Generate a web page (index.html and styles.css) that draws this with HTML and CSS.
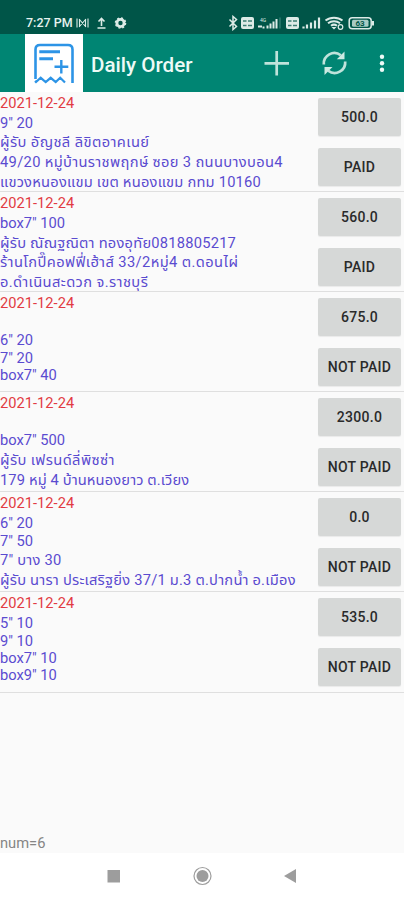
FILE: index.html
```
<!DOCTYPE html>
<html lang="th">
<head>
<meta charset="utf-8">
<title>Daily Order</title>
<link rel="stylesheet" href="styles.css">
</head>
<body>
<div class="screen">
  <div class="status">
    <span class="time">7:27 PM</span>
    <svg class="status-left" width="54" height="16" viewBox="0 0 54 16" fill="none" stroke="#dcebe7" stroke-width="1.3">
      <path d="M2 3.5v9M13 3.5v9M4 4l7 8M11 4l-7 8M4.5 4v8M10.500 4v8" stroke-width="1.100"/>
      <path d="M26.500 11V3.500M23.500 6.500l3-3 3 3M22.500 13h8" stroke-width="1.600"/>
      <circle cx="45.500" cy="8" r="3.600" stroke-width="2.800"/>
      <circle cx="45.500" cy="8" r="5.100" stroke-width="1.400" stroke-dasharray="2 2"/>
    </svg>
    <svg class="status-right" width="150" height="16" viewBox="0 0 150 16" fill="none" stroke="#dcebe7" stroke-width="1.500">
      <path d="M1.500 4.500l7 7-3.500 3V1.500l3.500 3-7 7"/>
      <rect x="13" y="2" width="13" height="12" rx="2" fill="#dcebe7" stroke="none"/>
      <path d="M15 6h3.500M20 6h4M15 10.500h3.500M20 10.500h4" stroke="#3b7f74" stroke-width="1.500"/>
      <path d="M30 11.500h4M35.500 13.500v-2" stroke-width="2"/>
      <text x="32" y="6.500" class="tiny">4G</text>
      <path d="M39.500 13.500v-3M42.500 13.500v-5M45.500 13.500v-7M48.500 13.500V4" stroke-width="2"/>
      <path d="M52 13.500V2.500" stroke="#2c7b6f" stroke-width="1.500"/>
      <rect x="58" y="2" width="13" height="12" rx="2" fill="#dcebe7" stroke="none"/>
      <path d="M60 6h3.500M65 6h4M60 10.500h3.500M65 10.500h4" stroke="#3b7f74" stroke-width="1.500"/>
      <path d="M75.500 13.500v-2M79 13.500v-4M83 13.500v-6M87 13.500v-8M91 13.500v-11" stroke-width="2.200"/>
      <path d="M97.500 5.500c4.800-3.800 12.200-3.800 17 0M100 8.300c3.500-2.800 8.500-2.800 12 0M103 10.800c2-1.600 4-1.600 6 0" stroke-width="2"/>
      <path d="M103.500 12l2.500 2.500 2.500-2.500z" fill="#dcebe7" stroke="none"/>
      <circle cx="112.500" cy="12" r="2.300" stroke-width="1.200"/>
      <rect x="121.200" y="2.700" width="22" height="11" rx="3"/>
      <rect x="124" y="4.800" width="16.500" height="7" rx="1.500" fill="#a9cbc4" stroke="none"/>
      <path d="M145 6v4.500" stroke-width="2"/>
      <text x="127.500" y="11.300" class="battery">63</text>
    </svg>
  </div>
  <header class="bar">
    <div class="logo">
      <svg width="58" height="58" viewBox="0 0 58 58" fill="none" stroke="#2d94e6">
        <path d="M10.500 45V15.500c0-3 1.500-4.500 4.500-4.500h28c3 0 4.500 1.500 4.500 4.500V49" stroke-width="2.600"/>
        <path d="M10 47l1 1 4.700-4.200 5 4.200 5-4.200 5 4.200 4.500-4.200 4.800 4.700" stroke-width="2.200"/>
        <path d="M14.300 17.700H35M14.300 24.700H28" stroke-width="3"/>
        <path d="M36.300 26v13.500M29.500 32.700h13.800" stroke-width="2.400"/>
      </svg>
    </div>
    <h1>Daily Order</h1>
    <svg class="actions" width="140" height="58" viewBox="0 0 140 58" fill="none" stroke="#bfe3db">
      <path d="M12.700 17v24.500M.5 29.300h24.500" stroke-width="2.700"/>
      <path d="M59.800 30.500a10.600 10.600 0 0 1 17-9.300M81.200 27.500a10.600 10.600 0 0 1-17 9.300" stroke-width="2.700"/>
      <path d="M80.500 17.500v7.700h-7.700zM60.500 41V33h8z" fill="#cdeae3" stroke="none"/>
      <g fill="#eefaf7" stroke="none"><circle cx="118" cy="22.800" r="2.200"/><circle cx="118" cy="29.300" r="2.200"/><circle cx="118" cy="35.800" r="2.200"/></g>
    </svg>
  </header>
  <main class="list">
    <section class="row">
      <div class="info"><p class="date">2021-12-24</p><p>9" 20</p><p class="th loose">ผู้รับ อัญชลี ลิขิตอาคเนย์</p><p class="th wide">49/20 หมู่บ้านราชพฤกษ์ ซอย 3 ถนนบางบอน4</p><p class="th medium">แขวงหนองแขม เขต หนองแขม กทม 10160</p></div>
      <div class="buttons"><button>500.0</button><button>PAID</button></div>
    </section>
    <section class="row">
      <div class="info"><p class="date">2021-12-24</p><p>box7" 100</p><p class="th medium">ผู้รับ ณัณฐณิตา ทองอุทัย0818805217</p><p class="th loose">ร้านโกปี๊คอฟฟี่เฮ้าส์ 33/2หมู่4 ต.ดอนไผ่</p><p class="th loose">อ.ดำเนินสะดวก จ.ราชบุรี</p></div>
      <div class="buttons"><button>560.0</button><button>PAID</button></div>
    </section>
    <section class="row">
      <div class="info"><p class="date">2021-12-24</p><p></p><p>6" 20</p><p>7" 20</p><p>box7" 40</p></div>
      <div class="buttons"><button>675.0</button><button>NOT PAID</button></div>
    </section>
    <section class="row">
      <div class="info"><p class="date">2021-12-24</p><p></p><p>box7" 500</p><p class="th loose">ผู้รับ เฟรนด์ลี่พิซซ่า</p><p class="th slight">179 หมู่ 4 บ้านหนองยาว ต.เวียง</p></div>
      <div class="buttons"><button>2300.0</button><button>NOT PAID</button></div>
    </section>
    <section class="row">
      <div class="info"><p class="date">2021-12-24</p><p>6" 20</p><p>7" 50</p><p class="th medium">7" บาง 30</p><p class="th medium">ผู้รับ นารา ประเสริฐยิ่ง 37/1 ม.3 ต.ปากน้ำ อ.เมือง</p></div>
      <div class="buttons"><button>0.0</button><button>NOT PAID</button></div>
    </section>
    <section class="row">
      <div class="info"><p class="date">2021-12-24</p><p>5" 10</p><p>9" 10</p><p>box7" 10</p><p>box9" 10</p></div>
      <div class="buttons"><button>535.0</button><button>NOT PAID</button></div>
    </section>
  </main>
  <div class="count">num=6</div>
  <nav class="nav">
    <svg width="404" height="47" viewBox="0 0 404 47" fill="#9d9d9d">
      <rect x="107.500" y="17" width="12.500" height="12.500"/>
      <circle cx="202.500" cy="23" r="8.500" fill="none" stroke="#9d9d9d" stroke-width="1.200"/>
      <circle cx="202.500" cy="23" r="6"/>
      <path d="M284 23l12-7v14z"/>
    </svg>
  </nav>
</div>
</body>
</html>
```
FILE: styles.css
```
* { box-sizing: border-box; }
body { margin: 0; font-family: Roboto, "Noto Sans Thai", "Noto Sans", sans-serif; }
.screen { width: 404px; height: 900px; display: flex; flex-direction: column; background: #fafafa; overflow: hidden; }
.status { height: 34px; background: #005548; display: flex; align-items: flex-end; padding: 0 5px 3px 26px; color: #e6f2ef; }
.time { width: 48px; font-size: 12.5px; font-weight: 500; line-height: 16px; white-space: nowrap; }
.status-left { margin-left: 1px; }
.status-right { margin-left: auto; margin-right: 21px; }
.tiny { font-size: 5px; fill: #dcebe7; stroke: none; }
.battery { font-size: 8px; font-weight: 700; fill: #005548; stroke: none; }
.bar { height: 58px; background: #008573; display: flex; align-items: center; padding-left: 25px; }
.logo { width: 58px; height: 58px; background: #fff; }
h1 { margin: 4px 0 0 8px; font-size: 20.600px; font-weight: 500; line-height: 24px; color: #edfaf6; white-space: nowrap; }
.actions { margin-left: auto; }
.row { height: 100.1px; display: flex; justify-content: space-between; border-bottom: 1.500px solid #dfdfdf; }
.info { padding-top: 2px; color: #5a4bd0; }
p { margin: 0; height: 17.400px; line-height: 17.400px; font-size: 14.700px; white-space: pre; }
.date { height: 20.800px; line-height: 19px; color: #e23a42; }
.th { height: 19.700px; padding-top: 2.300px; }
.slight { letter-spacing: .12px; }
.medium { letter-spacing: .22px; }
.wide { letter-spacing: .33px; }
.loose { letter-spacing: .4px; }
.buttons { width: 83px; margin-right: 3px; padding-top: 6px; display: flex; flex-direction: column; gap: 12px; flex: none; }
button { height: 38px; padding: 0; border: 0; border-radius: 2px; background: #d6d8d7; box-shadow: 0 1px 1px #0001; color: #2a2a2a; font: 500 14px/38px Roboto, sans-serif; letter-spacing: .3px; }
.count { margin-top: auto; height: 20px; font-size: 14.700px; line-height: 20px; color: #858585; }
.nav { height: 47px; background: #fff; }
.nav svg { display: block; }
```
